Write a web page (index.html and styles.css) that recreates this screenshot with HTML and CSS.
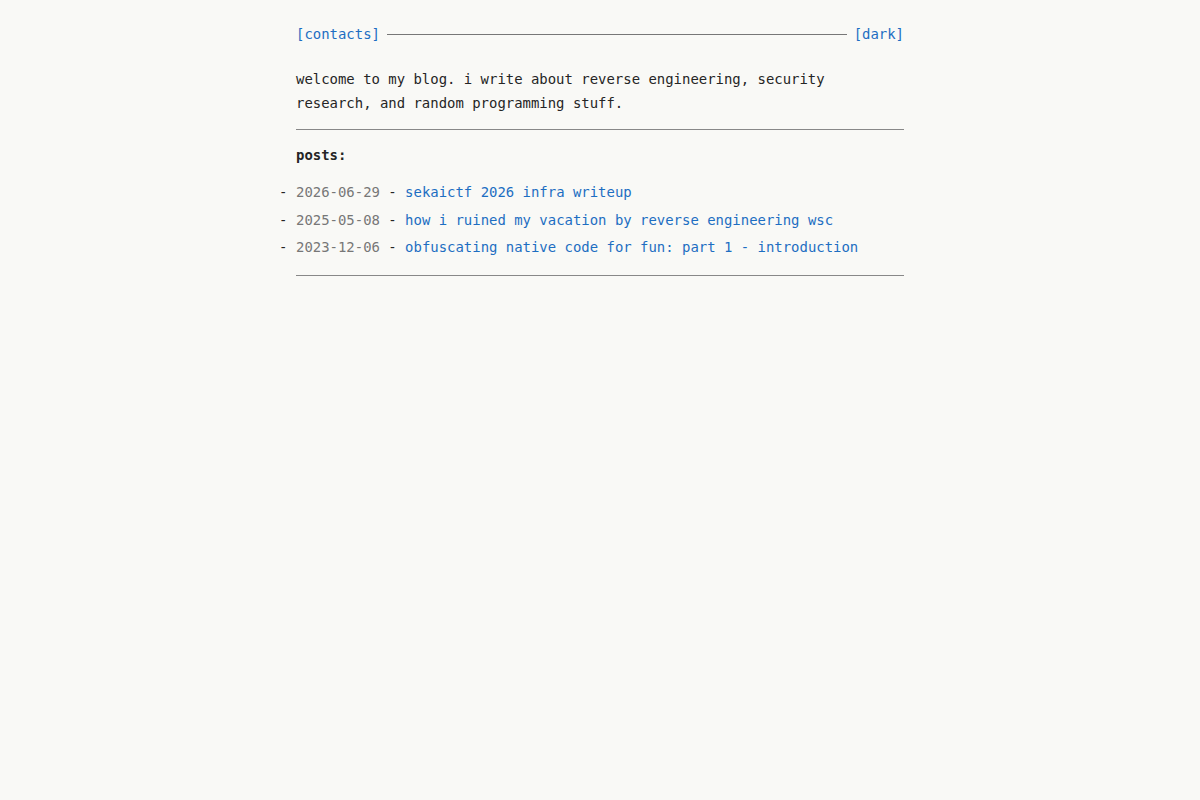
FILE: index.html
```html
<!DOCTYPE html>
<html lang="en">
<head>
<meta charset="utf-8">
<title>blog</title>
<link rel="stylesheet" href="styles.css">
</head>
<body>
<main class="page">
  <nav class="nav">
    <a class="link" href="#">[contacts]</a>
    <span class="nav-rule"></span>
    <a class="link" href="#">[dark]</a>
  </nav>
  <p class="intro">welcome to my blog. i write about reverse engineering, security research, and random programming stuff.</p>
  <hr class="rule">
  <h2 class="heading">posts:</h2>
  <ul class="posts">
    <li class="post"><span class="date">2026-06-29</span> - <a class="link" href="#">sekaictf 2026 infra writeup</a></li>
    <li class="post"><span class="date">2025-05-08</span> - <a class="link" href="#">how i ruined my vacation by reverse engineering wsc</a></li>
    <li class="post"><span class="date">2023-12-06</span> - <a class="link" href="#">obfuscating native code for fun: part 1 - introduction</a></li>
  </ul>
  <hr class="rule">
</main>
</body>
</html>
```
FILE: styles.css
```css
html, body {
  margin: 0;
  padding: 0;
  background: #f9f9f6;
}
body {
  font-family: "DejaVu Sans Mono", "Liberation Mono", monospace;
  font-size: 13.95px;
  line-height: 24px;
  color: #252525;
}
.page {
  width: 608px;
  margin: 0 auto;
  padding-top: 22px;
}
.link {
  color: #1d6ec2;
  text-decoration: none;
}
.nav {
  display: flex;
  align-items: center;
  gap: 7px;
}
.nav-rule {
  flex: 1;
  height: 1px;
  background: #777;
}
.intro {
  margin: 21px 0 14px;
  padding-right: 70px;
}
.rule {
  border: 0;
  height: 1px;
  background: #888;
  margin: 0;
}
.heading {
  font-size: 13.95px;
  font-weight: bold;
  margin: 13px 0 13px;
  line-height: 24px;
}
.posts {
  margin: 0 0 16px;
  padding: 0;
  list-style: none;
}
.post {
  position: relative;
  margin-bottom: 3.5px;
}
.post::before {
  content: "-";
  position: absolute;
  left: -17px;
}
.date {
  color: #777;
}
```
